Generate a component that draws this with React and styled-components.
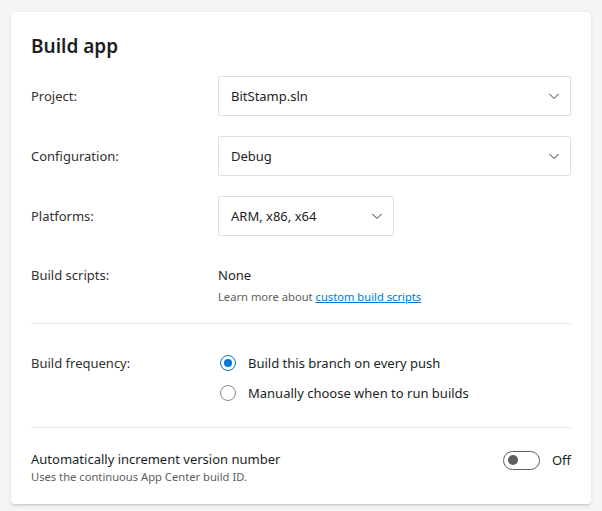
import React from 'react';
import styled, { createGlobalStyle } from 'styled-components';

const GlobalStyle = createGlobalStyle`
    html, body {
        margin: 0;
        padding: 0;
        background: #f5f5f5;
        font-family: "Noto Sans", "Open Sans", sans-serif;
        color: #201f1e;
    }
`

const Page = styled.div`
    padding: 12px 11px 8px 11px;
`

const Card = styled.div`
    background: #ffffff;
    border-radius: 4px;
    box-shadow: 0 1.6px 3.6px rgba(0, 0, 0, 0.1), 0 0.3px 0.9px rgba(0, 0, 0, 0.08);
    padding: 20px 20px 19px 20px;
`

const Title = styled.h2`
    margin: 0 0 16px 0;
    font-size: 19px;
    line-height: 28px;
    font-weight: 600;
    color: #201f1e;
`

const Row = styled.div`
    display: grid;
    grid-template-columns: 187px 1fr;
    align-items: ${props => props.align || 'center'};
    margin-bottom: ${props => props.gap || 0}px;
`

const Label = styled.div`
    font-size: 13px;
    line-height: 20px;
    color: #323130;
`

const Select = styled.div`
    display: flex;
    align-items: center;
    justify-content: space-between;
    box-sizing: border-box;
    height: 40px;
    width: ${props => props.width || '100%'};
    padding: 0 10px 0 12px;
    border: 1px solid #e1dfdd;
    border-radius: 2px;
    font-size: 13px;
    color: #201f1e;
`

const Value = styled.div`
    font-size: 13px;
    line-height: 20px;
    color: #201f1e;
`

const Hint = styled.div`
    font-size: 11.2px;
    line-height: 16px;
    color: #605e5c;
    margin-top: 4px;
`

const Link = styled.a`
    color: #0078d4;
    text-decoration: underline;
    cursor: pointer;
`

const Divider = styled.hr`
    border: none;
    border-top: 1px solid #edebe9;
    margin: ${props => props.margin};
`

const Options = styled.div`
    display: flex;
    flex-direction: column;
    gap: 10px;
`

const Option = styled.label`
    display: flex;
    align-items: center;
    gap: 12px;
    padding-left: 2px;
    font-size: 13px;
    line-height: 20px;
    color: #201f1e;
`

const RadioMark = styled.span`
    position: relative;
    box-sizing: border-box;
    width: 16px;
    height: 16px;
    border-radius: 50%;
    border: 1px solid ${props => props.checked ? '#0078d4' : '#8a8886'};
    background: #fff;
    &::after {
        content: '';
        display: ${props => props.checked ? 'block' : 'none'};
        position: absolute;
        left: 3px;
        top: 3px;
        width: 8px;
        height: 8px;
        border-radius: 50%;
        background: #0078d4;
    }
`

const ToggleRow = styled.div`
    display: flex;
    align-items: flex-start;
    justify-content: space-between;
`

const ToggleText = styled.div`
    display: flex;
    flex-direction: column;
`

const ToggleLabel = styled.div`
    font-size: 13px;
    line-height: 20px;
    color: #201f1e;
`

const ToggleHint = styled.div`
    font-size: 11.2px;
    line-height: 16px;
    color: #605e5c;
`

const ToggleWrap = styled.div`
    display: flex;
    align-items: center;
    gap: 12px;
    margin-top: 1px;
    font-size: 13px;
    line-height: 20px;
    color: #201f1e;
`

const Switch = styled.span`
    position: relative;
    box-sizing: border-box;
    width: 37px;
    height: 19px;
    border-radius: 10px;
    border: 1px solid #605e5c;
    &::after {
        content: '';
        position: absolute;
        left: 4px;
        top: 3.5px;
        width: 10px;
        height: 10px;
        border-radius: 50%;
        background: #605e5c;
    }
`

const Chevron = () => (
    <svg width="12" height="12" viewBox="0 0 12 12" fill="none">
        <path d="M1.5 4l4.5 4.5L10.5 4" stroke="#323130" strokeWidth="1" />
    </svg>
)

export default function App () {
    return (
        <Page>
            <GlobalStyle />
            <Card>
                <Title>Build app</Title>
                <Row gap={20}>
                    <Label>Project:</Label>
                    <Select>BitStamp.sln<Chevron /></Select>
                </Row>
                <Row gap={20}>
                    <Label>Configuration:</Label>
                    <Select>Debug<Chevron /></Select>
                </Row>
                <Row gap={29}>
                    <Label>Platforms:</Label>
                    <Select width="176px">ARM, x86, x64<Chevron /></Select>
                </Row>
                <Row align="start">
                    <Label>Build scripts:</Label>
                    <div>
                        <Value>None</Value>
                        <Hint>Learn more about <Link>custom build scripts</Link></Hint>
                    </div>
                </Row>
                <Divider margin="18px 0 29px 0" />
                <Row align="start">
                    <Label>Build frequency:</Label>
                    <Options>
                        <Option><RadioMark checked />Build this branch on every push</Option>
                        <Option><RadioMark />Manually choose when to run builds</Option>
                    </Options>
                </Row>
                <Divider margin="24px 0 21px 0" />
                <ToggleRow>
                    <ToggleText>
                        <ToggleLabel>Automatically increment version number</ToggleLabel>
                        <ToggleHint>Uses the continuous App Center build ID.</ToggleHint>
                    </ToggleText>
                    <ToggleWrap>
                        <Switch />
                        Off
                    </ToggleWrap>
                </ToggleRow>
            </Card>
        </Page>
    )
}
